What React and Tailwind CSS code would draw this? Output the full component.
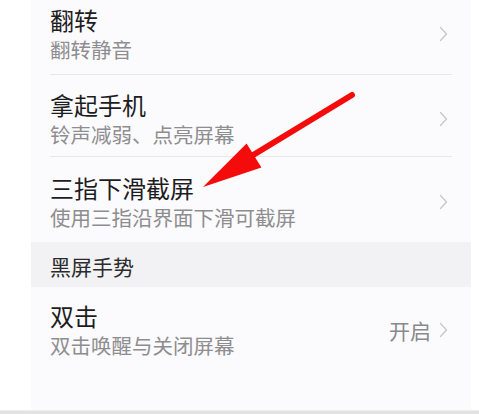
import React from "react";

const font = { fontFamily: '"Noto Sans CJK SC", "Noto Sans", sans-serif' };

function Chevron() {
  return (
    <svg width="9" height="16" viewBox="0 0 9 16" className="shrink-0">
      <path d="M1.5 1.5 L7.5 8 L1.5 14.5" fill="none" stroke="#c9c8cb" strokeWidth="1.4" strokeLinecap="round" strokeLinejoin="round" />
    </svg>
  );
}

function Row({ title, sub, right, h, pt, divider = true, extra }) {
  return (
    <div className="relative flex flex-col" style={{ height: h }}>
      <div className="flex items-center pl-[19px] pr-[23px]" style={{ paddingTop: pt }}>
        <div className="flex flex-1 flex-col gap-[7px]">
          <div className="text-[24px] leading-[24px] text-[#1d1d1f]">{title}</div>
          <div className="text-[20.5px] leading-[21px] text-[#8e8d90]">{sub}</div>
        </div>
        <div className="flex items-center gap-[8px]">
          {right && <span className="text-[21px] leading-[21px] text-[#8a898c]">{right}</span>}
          <Chevron />
        </div>
      </div>
      {divider && <div className="absolute bottom-0 left-[19px] right-[19px] h-px bg-[#e7e6e9]" />}
    </div>
  );
}

export default function App() {
  return (
    <div className="relative w-[479px] h-[414px] overflow-hidden bg-white flex flex-col" style={font}>
      <div className="flex h-[410px]">
        <div className="w-[31px] bg-white" />
        <div className="w-[440px] bg-[#fbfafc] flex flex-col">
          <Row title="翻转" sub="翻转静音" h={75} pt={8} />
          <Row title="拿起手机" sub="铃声减弱、点亮屏幕" h={82} pt={18} />
          <Row title="三指下滑截屏" sub="使用三指沿界面下滑可截屏" h={85} pt={19} divider={false} />
          <div className="h-[45px] bg-[#f2f1f4] pl-[19px] pt-[14px] text-[21px] leading-[21px] text-[#2b2b2d]">黑屏手势</div>
          <Row title="双击" sub="双击唤醒与关闭屏幕" right="开启" h={123} pt={17} divider={false} />
        </div>
        <div className="flex-1 bg-white" />
      </div>
      <div className="h-px bg-[#f0f0f0]" />
      <div className="flex-1 bg-[#e2e2e2]" />
      <svg className="absolute inset-0 pointer-events-none" width="479" height="414" viewBox="0 0 479 414">
        <line x1="352" y1="95" x2="240" y2="163" stroke="#f40b0b" strokeWidth="6" strokeLinecap="round" />
        <polygon points="203,187 246.6,143.6 261.4,167.4" fill="#f40b0b" />
      </svg>
    </div>
  );
}
